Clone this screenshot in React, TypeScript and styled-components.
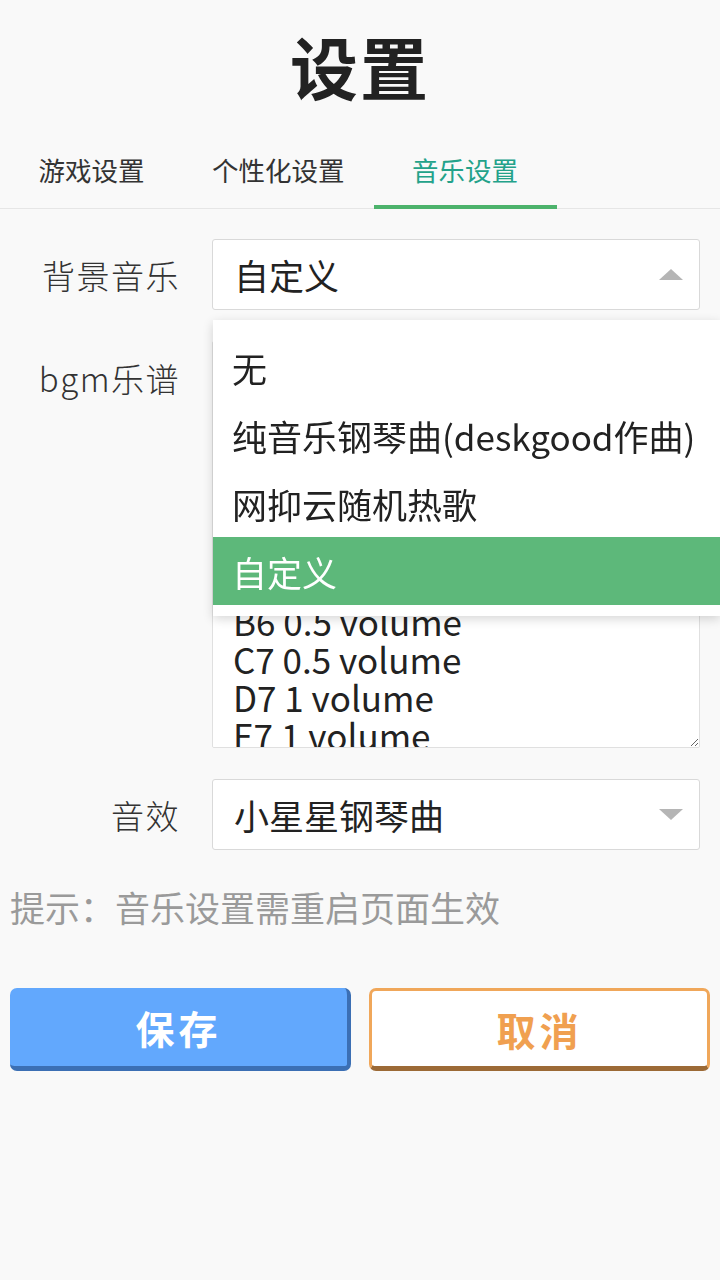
import React, { useEffect, useRef } from "react";
import styled, { createGlobalStyle } from "styled-components";

const GlobalStyle = createGlobalStyle`
  html, body {
    margin: 0;
    padding: 0;
    background: #f9f9f9;
  }
  body {
    font-family: "Noto Sans CJK SC", "Noto Sans", sans-serif;
    color: #222;
  }
  * { box-sizing: border-box; }
`;

const Page = styled.div`
  width: 720px;
  min-height: 1280px;
  background: #f9f9f9;
  display: flex;
  flex-direction: column;
`;

const Title = styled.h1`
  margin: 0;
  height: 130px;
  display: flex;
  align-items: center;
  justify-content: center;
  font-size: 68px;
  font-weight: 700;
  color: #222;
  letter-spacing: 2px;
`;

const TabBar = styled.div`
  display: flex;
  height: 79px;
  border-bottom: 1px solid #e6e6e6;
`;

const Tab = styled.div<{ $active?: boolean }>`
  position: relative;
  min-width: 183px;
  padding: 0 29px;
  display: flex;
  align-items: center;
  justify-content: center;
  font-size: 26.5px;
  color: ${(p) => (p.$active ? "#23a28a" : "#333")};
  &::after {
    content: "";
    position: absolute;
    left: 0;
    right: 0;
    bottom: -1px;
    height: 4px;
    background: ${(p) => (p.$active ? "#4db36c" : "transparent")};
  }
`;

const Form = styled.div`
  display: flex;
  flex-direction: column;
  gap: 31px;
  padding: 30px 20px 0 10px;
`;

const Row = styled.div<{ $top?: boolean }>`
  display: grid;
  grid-template-columns: 170px 1fr;
  column-gap: 32px;
  align-items: ${(p) => (p.$top ? "start" : "center")};
`;

const Label = styled.div<{ $offset?: number }>`
  text-align: right;
  font-size: 33px;
  font-weight: 300;
  color: #333;
  letter-spacing: 1.5px;
  padding-top: ${(p) => p.$offset ?? 0}px;
`;

const SelectWrap = styled.div`
  position: relative;
`;

const SelectBox = styled.div`
  height: 71px;
  background: #fff;
  border: 1px solid #d9d9d9;
  border-radius: 3px;
  display: flex;
  align-items: center;
  justify-content: space-between;
  padding: 0 16px 0 21px;
  font-size: 35px;
  color: #222;
`;

const Arrow = styled.span<{ $up?: boolean }>`
  width: 0;
  height: 0;
  border-left: 12px solid transparent;
  border-right: 12px solid transparent;
  ${(p) =>
    p.$up
      ? "border-bottom: 11px solid #b5b5b5;"
      : "border-top: 11px solid #b5b5b5;"}
`;

const Dropdown = styled.ul`
  position: absolute;
  top: calc(100% + 10px);
  left: 1px;
  right: -20px;
  margin: 0;
  padding: 13px 0 11px;
  list-style: none;
  background: #fff;
  box-shadow: 0 3px 10px rgba(0, 0, 0, 0.16);
  z-index: 10;
`;

const Option = styled.li<{ $selected?: boolean }>`
  height: 68px;
  display: flex;
  align-items: center;
  padding-left: 19px;
  font-size: 35px;
  white-space: nowrap;
  background: ${(p) => (p.$selected ? "#5db87a" : "transparent")};
  color: ${(p) => (p.$selected ? "#fff" : "#222")};
`;

const TextArea = styled.textarea`
  display: block;
  width: 100%;
  height: 407px;
  margin: 0;
  padding: 10px 20px;
  border: 1px solid #e0e0e0;
  border-radius: 2px;
  background: #fff;
  font-family: "Noto Sans CJK SC", "Noto Sans", sans-serif;
  font-size: 35px;
  line-height: 38px;
  color: #222;
  resize: both;
  outline: none;
  &::-webkit-scrollbar {
    width: 16px;
  }
  &::-webkit-scrollbar-track {
    background: transparent;
  }
  &::-webkit-scrollbar-thumb {
    background: #c8c8c8;
    border-left: 3px solid transparent;
    border-right: 8px solid transparent;
    background-clip: padding-box;
  }
`;

const Hint = styled.p`
  margin: 31px 0 0;
  padding: 0 10px;
  font-size: 35px;
  color: #9a9a9a;
`;

const Buttons = styled.div`
  display: grid;
  grid-template-columns: 1fr 1fr;
  gap: 18px;
  padding: 0 10px;
  margin-top: 56px;
`;

const Button = styled.button<{ $variant: "primary" | "ghost" }>`
  height: 83px;
  border-radius: 7px;
  font-family: "Noto Sans CJK SC", sans-serif;
  font-size: 39px;
  font-weight: 700;
  letter-spacing: 4px;
  cursor: pointer;
  ${(p) =>
    p.$variant === "primary"
      ? `
    background: #62a8fd;
    color: #fff;
    border: none;
    border-right: 4px solid #3b6fb4;
    border-bottom: 5px solid #3b6fb4;
  `
      : `
    background: #fff;
    color: #f0a050;
    border: 3px solid #f0a75a;
    border-bottom: 5px solid #9c6a36;
  `}
`;

const score = [
  "C6 1 volume",
  "D6 1 volume",
  "E6 1 volume",
  "F6 0.5 volume",
  "G6 0.5 volume",
  "A6 0.5 volume",
  "A6 0.5 volume",
  "B6 0.5 volume",
  "C7 0.5 volume",
  "D7 1 volume",
  "E7 1 volume",
  "F7 1 volume",
  "G7 0.5 volume",
  "A7 0.5 volume",
  "B7 1 volume",
].join("\n");

export default function App() {
  const ref = useRef<HTMLTextAreaElement>(null);
  useEffect(() => {
    if (ref.current) ref.current.scrollTop = 16;
  }, []);

  return (
    <Page>
      <GlobalStyle />
      <Title>设置</Title>
      <TabBar>
        <Tab>游戏设置</Tab>
        <Tab>个性化设置</Tab>
        <Tab $active>音乐设置</Tab>
      </TabBar>
      <Form>
        <Row>
          <Label>背景音乐</Label>
          <SelectWrap>
            <SelectBox>
              <span>自定义</span>
              <Arrow $up />
            </SelectBox>
            <Dropdown>
              <Option>无</Option>
              <Option>纯音乐钢琴曲(deskgood作曲)</Option>
              <Option>网抑云随机热歌</Option>
              <Option $selected>自定义</Option>
            </Dropdown>
          </SelectWrap>
        </Row>
        <Row $top>
          <Label $offset={13}>bgm乐谱</Label>
          <TextArea ref={ref} defaultValue={score} spellCheck={false} />
        </Row>
        <Row>
          <Label>音效</Label>
          <SelectBox>
            <span>小星星钢琴曲</span>
            <Arrow />
          </SelectBox>
        </Row>
      </Form>
      <Hint>提示：音乐设置需重启页面生效</Hint>
      <Buttons>
        <Button $variant="primary">保存</Button>
        <Button $variant="ghost">取消</Button>
      </Buttons>
    </Page>
  );
}
